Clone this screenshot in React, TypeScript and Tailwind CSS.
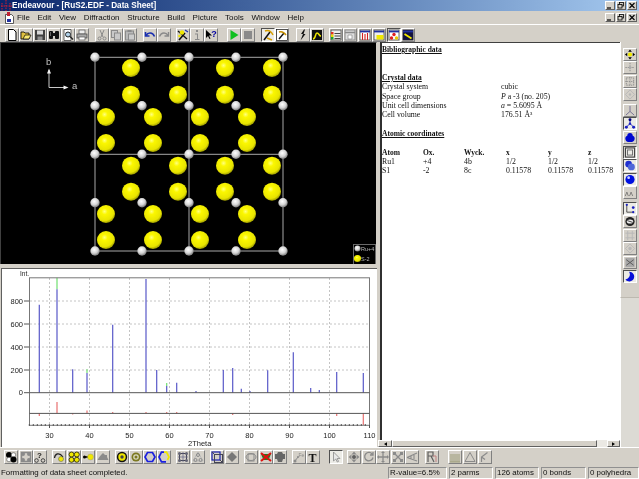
import React, { ReactNode } from "react";

const G = "#8a8a8a";
const D = "#5f5f5f";
const L = "#b8b8b8";
const Y = "#f0e800";

const icons: Record<string, ReactNode> = {
  new: <path d="M2.5 .5h5l2.5 2.5v8.5h-7.5z" fill="#fff" stroke="#000" />,
  open: <><path d="M1 3h3l1 1h4v6H1z" fill="#e0c040" stroke="#000" strokeWidth=".8" /><path d="M3 10l2-4h6l-2 4z" fill="#f8e870" stroke="#000" strokeWidth=".7" /></>,
  save: <><rect x="1" y="1" width="10" height="10" fill="#404040" /><rect x="3" y="1.5" width="6" height="4" fill="#d8d8d8" /><rect x="3.5" y="7.5" width="5" height="3.5" fill="#909090" /></>,
  find: <><rect x="1" y="2" width="4" height="8" rx="1" fill="#111" /><rect x="7" y="2" width="4" height="8" rx="1" fill="#111" /><rect x="4" y="4" width="4" height="3" fill="#111" /><rect x="2" y="3" width="1" height="4" fill="#666" /></>,
  preview: <><path d="M2 .5h7v11H2z" fill="#fff" stroke="#444" strokeWidth=".8" /><circle cx="6" cy="5.5" r="2.5" fill="#b0d0e8" stroke="#222" /><path d="M8 7.5l3 3" stroke="#222" strokeWidth="1.4" /></>,
  print: <><rect x="3" y="1" width="6" height="4" fill="#eee" stroke="#555" strokeWidth=".7" /><rect x="1" y="5" width="10" height="4" fill="#a8a8a8" stroke="#444" strokeWidth=".7" /><rect x="3" y="8" width="6" height="3" fill="#fff" stroke="#555" strokeWidth=".7" /></>,
  cut: <><path d="M4 1l3 7M8 1L5 8" stroke={G} fill="none" /><circle cx="3.5" cy="9.5" r="1.5" fill="none" stroke={G} /><circle cx="8.5" cy="9.5" r="1.5" fill="none" stroke={G} /></>,
  copy: <><rect x="1.5" y="1.5" width="6" height="7" fill="#c8c8c8" stroke={G} /><rect x="4.5" y="4" width="6" height="7" fill="#c8c8c8" stroke={G} /></>,
  paste: <><rect x="1.5" y="2" width="8" height="9" fill={L} stroke={G} /><rect x="4.5" y="5" width="6" height="6" fill="#ccc" stroke={G} /><rect x="3.5" y="1" width="4" height="2" fill={G} /></>,
  undo: <path d="M1.5 3v4h4M2 6.5C4 3 8.5 3 10.5 7.5" fill="none" stroke="#1a2fb0" strokeWidth="1.6" />,
  redo: <path d="M10.5 3v4h-4M10 6.5C8 3 3.5 3 1.5 7.5" fill="none" stroke={G} strokeWidth="1.4" />,
  wizard: <><path d="M2 11l6-7" stroke="#111" strokeWidth="1.6" /><path d="M1 2l9 8" stroke="#111" strokeWidth="1.3" /><circle cx="5" cy="3.5" r="2.2" fill={Y} /><circle cx="2.5" cy="7" r="1.3" fill={Y} /><path d="M8 1l3 2" stroke="#1a2fb0" strokeWidth="1.2" /></>,
  info: <><rect x="5" y="1" width="2" height="2" fill={G} /><path d="M4 4.5h3V10h1.5v1h-4.5v-1H6V5.5H4z" fill={G} /></>,
  help: <><path d="M1 1v8l2-2 1.5 3 1-.6L4 6.5h3z" fill="#000" /><text x="6.2" y="8" fontSize="9" fontWeight="700" fill="#0000a0" fontFamily="Liberation Sans, sans-serif">?</text></>,
  play: <path d="M2.5 1l8 5-8 5z" fill="#10c020" />,
  stop: <rect x="2" y="2" width="8" height="8" fill={G} />,
  pick: <><path d="M2 11l6-8" stroke="#111" strokeWidth="1.5" /><path d="M3 2c3-1 6 0 8 4" stroke="#d8a000" strokeWidth="1.5" fill="none" /><path d="M5 9l5 2" stroke="#d8a000" strokeWidth="1.5" /></>,
  pick2: <><rect x=".5" y=".5" width="11" height="11" fill="#fff" stroke="#111" strokeWidth=".7" /><path d="M3 10l5-6" stroke="#111" strokeWidth="1.4" /><path d="M3 3c3-1 5 0 7 3" stroke="#c89000" strokeWidth="1.4" fill="none" /></>,
  bolt: <path d="M7 .5L4 5h2L3.5 11.5 8.5 5H6.500L8 .5z" fill="#111" />,
  curve: <><rect x="1" y="1" width="10" height="10" fill="#111" /><path d="M2 10c3 0 2-6 4-6s2 3 4 3" stroke={Y} strokeWidth="1.5" fill="none" /></>,
  list: <><rect x="1" y="1" width="10" height="10" fill="#eee" stroke="#444" strokeWidth=".8" /><rect x="1" y="3" width="2.5" height="2.5" fill="#e03020" /><rect x="1" y="5.5" width="2.5" height="2.5" fill="#e8d800" /><rect x="1" y="8" width="2.5" height="2.5" fill="#20a030" /><path d="M4.5 4.5h6M4.5 7h6M4.5 9.5h6" stroke="#444" /></>,
  gwin: <><rect x="1" y="1" width="10" height="10" fill="#ddd" stroke={G} /><path d="M1 3.5h10" stroke={G} strokeWidth="1.5" /><path d="M4 6h4v4H4z" fill="#fff" stroke={G} strokeWidth=".7" /></>,
  rbars: <><rect x="1" y="1" width="10" height="10" fill="#fff" stroke="#444" strokeWidth=".8" /><path d="M1 2.5h10" stroke="#2030a0" strokeWidth="1.8" /><path d="M3.5 4v7M6 5v6M8.5 4v7" stroke="#d02020" strokeWidth="1.1" /></>,
  ywin: <><rect x="1" y="1" width="10" height="10" fill="#eee" stroke="#444" strokeWidth=".8" /><path d="M1 2.5h10" stroke="#2030a0" strokeWidth="1.8" /><rect x="3.5" y="6" width="7" height="4.5" fill={Y} /></>,
  awin: <><rect x="1" y="1" width="10" height="10" fill="#fff" stroke="#444" strokeWidth=".8" /><path d="M1 2.5h10" stroke="#2030a0" strokeWidth="1.8" /><circle cx="6" cy="5.5" r="1.7" fill="#e02020" /><circle cx="3.5" cy="9" r="1.7" fill="#e02020" /><circle cx="8.5" cy="9" r="1.7" fill="#e8c800" /></>,
  nwin: <><rect x="1" y="1" width="10" height="10" fill="#101040" stroke="#223" strokeWidth=".8" /><path d="M1 2.5h10" stroke="#2030a0" strokeWidth="1.8" /><path d="M2.5 5l7 4.5" stroke={Y} strokeWidth="1.8" /></>,

  bw: <><circle cx="4" cy="4" r="3" fill="#000" /><circle cx="8.5" cy="4" r="2.3" fill="#fff" stroke="#333" strokeWidth=".5" /><circle cx="4" cy="8.5" r="2.3" fill="#fff" stroke="#333" strokeWidth=".5" /><circle cx="8.5" cy="8.5" r="3" fill="#000" /></>,
  gcl: <><rect x="1.5" y="1.5" width="9" height="9" fill="none" stroke={G} strokeWidth="1.5" /><circle cx="3" cy="3" r="2" fill={G} /><circle cx="9" cy="3" r="2" fill={G} /><circle cx="3" cy="9" r="2" fill={G} /><circle cx="9" cy="9" r="2" fill={G} /></>,
  qr: <><text x="3" y="7" fontSize="8" fontWeight="700" fill="#222" fontFamily="Liberation Sans, sans-serif">?</text><circle cx="2.5" cy="9.5" r="1.8" fill="none" stroke="#444" /><circle cx="9" cy="9.5" r="1.8" fill="none" stroke="#444" /></>,
  arc: <><path d="M1.5 7C2 3 6 .5 10 6" stroke="#222" strokeWidth="1.2" fill="none" /><circle cx="8" cy="8" r="2.5" fill={Y} stroke="#555" strokeWidth=".5" /></>,
  yq: <><circle cx="3.5" cy="3.5" r="2.5" fill={Y} stroke="#000" strokeWidth=".7" /><circle cx="8.8" cy="3.5" r="2.5" fill={Y} stroke="#000" strokeWidth=".7" /><circle cx="3.5" cy="8.8" r="2.5" fill={Y} stroke="#000" strokeWidth=".7" /><circle cx="8.8" cy="8.8" r="2.5" fill={Y} stroke="#000" strokeWidth=".7" /></>,
  bond: <><circle cx="2.5" cy="6" r="1.5" fill="#000" /><path d="M2 6h6" stroke="#000" strokeWidth="1.5" /><circle cx="8.5" cy="6" r="3" fill={Y} stroke="#888" strokeWidth=".4" /></>,
  gbl: <path d="M6 2l2 2h2v2l1.5 3H.5L2 6.5 4 4z" fill={G} />,
  ring: <><circle cx="6" cy="6" r="5.2" fill="#111" /><circle cx="6" cy="6" r="3.7" fill={Y} /><circle cx="6" cy="6" r="1.7" fill="#444" /></>,
  oring: <><circle cx="6" cy="6" r="4.5" fill="#7c7820" /><circle cx="6" cy="6" r="2.8" fill="#d8d8c0" /><circle cx="6" cy="6" r="1.5" fill="#7c7820" /></>,
  hexb: <path d="M3.5 1.5h5L11 6l-2.500 4.500h-5L1 6z" fill="none" stroke="#1a20e0" strokeWidth="1.7" />,
  hexy: <><path d="M6 1.2h2.500L11 6l-1.500 3" fill="none" stroke={Y} strokeWidth="1.7" /><path d="M6 1.2H3.500L1 6l2.500 4.800H8" fill="none" stroke="#1a20e0" strokeWidth="1.7" /></>,
  lat: <><rect x="2.5" y="2.5" width="7" height="7" fill="none" stroke="#445" /><path d="M6 1v10M1 6h10" stroke="#668" strokeWidth=".7" /><circle cx="2.5" cy="2.5" r="1.5" fill="#667" /><circle cx="9.5" cy="2.5" r="1.5" fill="#667" /><circle cx="2.5" cy="9.5" r="1.5" fill="#667" /><circle cx="9.5" cy="9.5" r="1.5" fill="#667" /></>,
  glat: <><path d="M6 1L1 10h10z" fill="none" stroke={L} strokeWidth="1" /><circle cx="6" cy="4" r="1.5" fill="none" stroke={G} /><circle cx="3.5" cy="9" r="1.5" fill="none" stroke={G} /><circle cx="8.5" cy="9" r="1.5" fill="none" stroke={G} /></>,
  cube: <><rect x="1" y="1" width="8" height="8" fill="none" stroke="#1a20b0" strokeWidth="1.2" /><rect x="3.5" y="3.5" width="8" height="8" fill="none" stroke="#445" strokeWidth="1" /><path d="M1 1l2.500 2.500M9 9l2.500 2.500" stroke="#445" /></>,
  dia: <path d="M6 1l5 5-5 5-5-5z" fill="#777" />,
  gcube: <><ellipse cx="6" cy="6" rx="5" ry="3.5" fill="none" stroke={G} /><rect x="3" y="3" width="6" height="7" fill="none" stroke={G} /></>,
  red: <><path d="M1 3h10L8.500 9h-5z" fill="#208020" /><path d="M1 2l10 8M11 2L1 10" stroke="#e01010" strokeWidth="2" /></>,
  gblob: <path d="M4 1h4l1 2h2v5H9l-1 3H4L3 8H1V3h2z" fill="#666" />,
  fe: <><circle cx="2" cy="10" r="1.5" fill={G} /><path d="M2 10l3-4" stroke={G} /><circle cx="5" cy="6" r="1" fill={G} /><text x="5.5" y="5.5" fontSize="5" fill={G} fontFamily="Liberation Sans, sans-serif">Fe</text></>,
  t: <text x="1.5" y="10.5" fontSize="12" fontWeight="700" fill="#111" fontFamily="Liberation Serif, serif">T</text>,
  ptr: <path d="M3.5 1v9l2.300-2 1.500 3 1.300-.6L7.100 7.500H10z" fill="#e8e8e8" stroke={G} strokeWidth=".8" />,
  mv: <><path d="M6 .5l2.500 3h-5zM6 11.500l2.500-3h-5zM.5 6l3-2.500v5zM11.500 6l-3-2.500v5z" fill={G} /><circle cx="6" cy="6" r="2" fill={D} /></>,
  rot: <path d="M9.5 3.5A4.200 4.200 0 1 0 10 6.500M10 1v3H7" fill="none" stroke={G} strokeWidth="1.3" />,
  cross: <><path d="M6 1v10M1 6h10" stroke={G} strokeWidth="1.3" /><path d="M6 0l2 2H4zM6 12l2-2H4zM0 6l2-2v4zM12 6l-2-2v4z" fill={G} /></>,
  xx: <><path d="M2.5 2.5l7 7M9.5 2.500l-7 7" stroke={G} strokeWidth="1.3" /><rect x="1" y="1" width="3" height="3" fill={G} /><rect x="8" y="1" width="3" height="3" fill={G} /><rect x="1" y="8" width="3" height="3" fill={G} /><rect x="8" y="8" width="3" height="3" fill={G} /></>,
  pers: <path d="M1 6.500L11 2M1 6.500L11 10M5 5v3M8 4v4" fill="none" stroke={G} strokeWidth="1.1" />,
  rr: <><path d="M2 1h5v4H2zM2 5v6M5 5l3 6" fill="none" stroke={D} strokeWidth="1.2" /><path d="M7 5h3v6" fill="none" stroke="#c08080" /></>,
  bars: <path d="M1 11h10M2 3v8M4 3v8M6 3v8M8 3v8M10 3v8" stroke="#9c9c78" fill="none" />,
  tri: <path d="M6 1.500L11 10.500H1z" fill="none" stroke={G} />,
  yy: <path d="M2.5 11V6l6-4.500M2.500 6L6 8.500" fill="none" stroke={G} strokeWidth="1.2" />,

  star: <><path d="M6 .5l2 2.500H4zM6 11.500l2-2.500H4zM.5 6L3 4v4zM11.500 6L9 4v4z" fill="#000" /><circle cx="6" cy="6" r="2.3" fill={Y} /></>,
  gs1: <><path d="M6 1v10M1 6h10" stroke={G} strokeDasharray="1.5 1" /><circle cx="6" cy="6" r="1.5" fill="#aaa" /></>,
  gs2: <><rect x="2" y="2" width="8" height="8" fill="none" stroke={G} strokeDasharray="1.5 1" /><path d="M6 1v10M1 6h10" stroke={G} strokeDasharray="1 1" /></>,
  gs3: <><path d="M6 1l5 5-5 5-5-5z" fill="none" stroke={L} /><circle cx="6" cy="6" r="1.3" fill={L} /></>,
  ax: <path d="M6 1v6M1.500 11L6 7l4.500 4" fill="none" stroke="#706c90" strokeWidth="1" />,
  net: <><path d="M6 2v4L2 10M6 6l4 4" fill="none" stroke="#1a20c0" /><circle cx="6" cy="2" r="1.6" fill="#000080" /><circle cx="6" cy="6.2" r="1.3" fill="#1a20c0" /><circle cx="2" cy="10" r="1.6" fill="#1a20c0" /><circle cx="10" cy="10" r="1.6" fill="#1a20c0" /></>,
  blob: <path d="M6 1c2 0 3 1.500 3 3 1.500 .5 2.500 2 2 4-.5 2-2 3-3 3H4c-1.500 0-2.500-1-3-3-.5-2 .5-3.500 2-4 0-1.500 1-3 3-3z" fill="#0008d0" />,
  sq: <><rect x="1" y="1" width="10" height="10" fill="none" stroke="#444" strokeWidth="1.3" /><rect x="3.2" y="3.2" width="5.6" height="5.6" fill="none" stroke="#666" /></>,
  s2: <><circle cx="4.5" cy="4.5" r="3.6" fill="#2030d0" /><circle cx="7.5" cy="7.5" r="3.8" fill="#5068d8" /></>,
  s1: <><circle cx="6" cy="6" r="5" fill="#0010e0" /><circle cx="4.5" cy="4" r="1.5" fill="#c8d0ff" /></>,
  aa: <text x=".5" y="10" fontSize="8" fill={D} fontFamily="Liberation Sans, sans-serif" letterSpacing=".6">ʌʌ</text>,
  axb: <><path d="M2.5 1v9h8" fill="none" stroke="#444" strokeWidth="1" /><circle cx="2.5" cy="2" r="1.2" fill="#1a20c0" /><circle cx="9.5" cy="5" r="1.5" fill="#1a20c0" /><circle cx="9.5" cy="10" r="1.2" fill="#1a20c0" /></>,
  ell: <><circle cx="6" cy="6" r="5" fill="#222" /><ellipse cx="6" cy="6" rx="3.5" ry="2.3" fill="#eee" /><path d="M3 5l6 2" stroke="#333" /></>,
  grid: <path d="M3.5 1v10M8.500 1v10M1 3.500h10M1 8.500h10" stroke={L} />,
  gd: <><path d="M6 1l5 5-5 5-5-5z" fill="none" stroke={L} /><circle cx="6" cy="6" r="1.8" fill={L} /></>,
  hatch: <><rect x="1" y="1" width="10" height="10" fill="#a8a8a8" /><path d="M2 3l8 6M10 3l-8 6" stroke="#555" /></>,
  moon: <path d="M5 .8A5.300 5.300 0 1 1 1 9.200 5.500 5.500 0 0 0 5 .8z" fill="#0810d8" />,
};

function Btn({ n, on, cls }: { n: string; on?: boolean; cls?: string }) {
  return (
    <div
      className={`box-border shrink-0 w-[14px] border ${cls ?? "h-[14px]"} ${
        on
          ? "border-t-[#505050] border-l-[#505050] border-b-white border-r-white bg-[#ecebe6]"
          : "border-t-white border-l-white border-b-[#808080] border-r-[#808080]"
      }`}
    >
      <svg viewBox="0 0 12 12" className="block w-full h-full">
        {icons[n]}
      </svg>
    </div>
  );
}

function Group({ items, cls }: { items: string[]; cls: string }) {
  return (
    <div className={`flex ${cls}`}>
      {items.map((s, i) => {
        const on = s.startsWith("*");
        return <Btn key={i} n={on ? s.slice(1) : s} on={on} />;
      })}
    </div>
  );
}

function VGroup({ items, cls }: { items: string[]; cls: string }) {
  return (
    <div className={`flex flex-col gap-[0.5px] ${cls}`}>
      {items.map((s, i) => {
        const on = s.startsWith("*");
        return <Btn key={i} n={on ? s.slice(1) : s} on={on} cls="h-[13px]" />;
      })}
    </div>
  );
}

function WinBtns() {
  return (
    <div className="flex gap-[1px]">
      {["min", "max", "close"].map((k) => (
        <div key={k} className="w-[10px] h-[9px] bg-[#d4d0c8] border border-t-white border-l-white border-b-[#606060] border-r-[#606060] box-border">
          <svg viewBox="0 0 8 7" className="block w-full h-full">
            {k === "min" && <path d="M1 6h4" stroke="#000" strokeWidth="1.2" />}
            {k === "max" && <><rect x="2.5" y=".5" width="4" height="3.5" fill="none" stroke="#000" strokeWidth=".8" /><rect x="1" y="2.5" width="4" height="3.5" fill="#d4d0c8" stroke="#000" strokeWidth=".8" /></>}
            {k === "close" && <path d="M1.5 1l5 5M6.500 1l-5 5" stroke="#000" strokeWidth="1.1" />}
          </svg>
        </div>
      ))}
    </div>
  );
}

const GREY_X = [95, 142, 189, 236, 283];
const GREY_Y = [57.3, 105.7, 154.3, 202.7, 251];
const YEL_A_X = [131, 178, 225, 272];
const YEL_A_Y = [68, 94.7, 165.7, 191.7];
const YEL_B_X = [106, 153, 200, 247];
const YEL_B_Y = [117, 143, 214, 240];

function Structure() {
  return (
    <svg width="375" height="221" className="block">
      <defs>
        <radialGradient id="yb" cx="0.42" cy="0.36" r="0.68">
          <stop offset="0" stopColor="#ffff80" />
          <stop offset="0.25" stopColor="#fbf700" />
          <stop offset="0.75" stopColor="#e8e400" />
          <stop offset="1" stopColor="#8c8a00" />
        </radialGradient>
        <radialGradient id="gb" cx="0.42" cy="0.36" r="0.68">
          <stop offset="0" stopColor="#ffffff" />
          <stop offset="0.55" stopColor="#d4d4d4" />
          <stop offset="1" stopColor="#6c6c6c" />
        </radialGradient>
      </defs>
      <g transform="translate(-1,-43)">
        <path d="M95 57.3H283V251H95zM189 57.3V251M95 154.3H283" fill="none" stroke="#a8a8a8" strokeWidth="1" />
        {YEL_A_Y.map((y) => YEL_A_X.map((x) => <circle key={`${x}-${y}`} cx={x} cy={y} r="9" fill="url(#yb)" />))}
        {YEL_B_Y.map((y) => YEL_B_X.map((x) => <circle key={`${x}-${y}`} cx={x} cy={y} r="9" fill="url(#yb)" />))}
        {GREY_Y.map((y) => GREY_X.map((x) => <circle key={`${x}-${y}`} cx={x} cy={y} r="4.7" fill="url(#gb)" />))}
        <path d="M49 70V87.5H67" fill="none" stroke="#c8c8c8" strokeWidth="1" />
        <path d="M49 68.5l2 5h-4zM68.5 87.5l-5 2v-4z" fill="#f0f0f0" />
        <text x="46" y="65" fontSize="9.5" fill="#c0c0c0" fontFamily="Liberation Sans, sans-serif">b</text>
        <text x="72" y="89" fontSize="9.5" fill="#c0c0c0" fontFamily="Liberation Sans, sans-serif">a</text>
        <rect x="353.5" y="244.5" width="22" height="20" fill="#000" stroke="#686868" />
        <circle cx="357.5" cy="248.5" r="3" fill="url(#gb)" />
        <circle cx="357.5" cy="258.5" r="3.6" fill="url(#yb)" />
        <text x="361" y="251" fontSize="5.5" fill="#b8b8b8" fontFamily="Liberation Sans, sans-serif">Ru+4</text>
        <text x="361" y="261" fontSize="5.5" fill="#b8b8b8" fontFamily="Liberation Sans, sans-serif">S-2</text>
      </g>
    </svg>
  );
}

const PEAKS: [number, number, number?][] = [
  [39.3, 304.7], [57, 289.3, 277.7], [72.7, 369.3], [87, 373, 369.3], [112.7, 324.7], [146, 279], [156.7, 370],
  [166.7, 386, 383], [176.7, 382.7], [196, 391], [223.3, 370], [232.7, 368], [241.3, 388.7], [250, 391],
  [267.7, 370.3], [293.3, 352.3], [310.7, 388], [319.3, 390], [336.7, 372], [363.3, 373],
];
const DIFFS: [number, number][] = [
  [39.3, 416], [57, 402], [72.7, 414.5], [87, 410.5], [112.7, 412], [146, 412], [166.7, 412], [176.7, 412],
  [232.7, 415], [336.7, 416], [363.3, 425],
];

function Chart() {
  const txs = [30, 40, 50, 60, 70, 80, 90, 100, 110];
  const minor: number[] = [];
  for (let x = 29.3; x < 369; x += 4) minor.push(x);
  return (
    <svg width="376" height="178" className="block">
      <g transform="translate(-2,-269)">
        {txs.map((t) => {
          const x = 49.5 + (t - 30) * 4;
          return <path key={t} d={`M${x} 278V425`} stroke="#c4c4c4" strokeDasharray="2 2" />;
        })}
        {[301, 324, 347, 370].map((y) => <path key={y} d={`M30 ${y}H369`} stroke="#c4c4c4" strokeDasharray="2 2" />)}
        {PEAKS.map(([x, top, g]) => (
          <g key={x}>
            {g && <path d={`M${x} ${g}V${top}`} stroke="#70e070" strokeWidth="1.2" />}
            <path d={`M${x} ${top}V392.7`} stroke="#5858c8" strokeWidth="1.2" />
          </g>
        ))}
        {DIFFS.map(([x, y]) => <path key={x} d={`M${x} ${y}V413.3`} stroke="#e87070" strokeWidth="1.2" />)}
        <rect x="29.5" y="277.8" width="340" height="147.5" fill="none" stroke="#777" />
        <path d="M29.5 392.7H369.5M29.5 413.4H369.5" stroke="#555" />
        {minor.map((x) => <path key={x} d={`M${x} 424V426`} stroke="#555" />)}
        {txs.map((t) => {
          const x = 49.5 + (t - 30) * 4;
          return <g key={t}><path d={`M${x} 425V428`} stroke="#555" /><text x={x} y="438" fontSize="7.5" fill="#222" textAnchor="middle" fontFamily="Liberation Sans, sans-serif">{t}</text></g>;
        })}
        {[[800, 301], [600, 324], [400, 347], [200, 370], [0, 392.7]].map(([v, y]) => (
          <g key={v}>
            <path d={`M24 ${y}H29`} stroke="#555" />
            <text x="23" y={y + 2.7} fontSize="7.5" fill="#222" textAnchor="end" fontFamily="Liberation Sans, sans-serif">{v}</text>
          </g>
        ))}
        <text x="20" y="276" fontSize="6.5" fill="#222" fontFamily="Liberation Sans, sans-serif">Int.</text>
        <text x="188" y="446" fontSize="7.5" fill="#222" fontFamily="Liberation Sans, sans-serif">2Theta</text>
      </g>
    </svg>
  );
}

function Row({ a, b, strong }: { a?: ReactNode; b?: ReactNode; strong?: boolean }) {
  return (
    <div className={`flex h-[9.33px] leading-[9.33px] whitespace-nowrap ${strong ? "font-bold underline text-[7.5px]" : ""}`}>
      <div className="w-[119px]">{a}</div>
      <div>{b}</div>
    </div>
  );
}

function TableRow({ c, bold }: { c: string[]; bold?: boolean }) {
  return (
    <div className={`grid grid-cols-[41px_41px_42px_42px_40px_1fr] h-[9.33px] leading-[9.33px] whitespace-nowrap ${bold ? "font-bold text-[7.5px]" : ""}`}>
      {c.map((s, i) => <div key={i}>{s}</div>)}
    </div>
  );
}

function Pane({ w, children }: { w: string; children: ReactNode }) {
  return (
    <div className={`${w} box-border h-[12px] mt-[1px] pl-[1px] leading-[10px] border border-t-[#909090] border-l-[#909090] border-b-white border-r-white ml-[2px] whitespace-nowrap`}>
      {children}
    </div>
  );
}

export default function App() {
  const menu = ["File", "Edit", "View", "Diffraction", "Structure", "Build", "Picture", "Tools", "Window", "Help"];
  return (
    <div className="w-[639px] h-[479px] overflow-hidden flex flex-col bg-[#d4d0c8] text-[#111] font-['Liberation_Sans',sans-serif] text-[8px] select-none blur-[0.35px]">
      {/* title */}
      <div className="h-[11px] flex items-center bg-gradient-to-r from-[#0a246a] to-[#a6caf0] pr-[2px] shrink-0">
        <svg viewBox="0 0 11 11" className="w-[11px] h-[11px] ml-[1px]">
          <path d="M5 0v11M1 3v8M9 3v8M0 6h11" stroke="#d02030" strokeDasharray="1.5 1" />
        </svg>
        <span className="text-white font-bold text-[8.2px] leading-[11px] whitespace-nowrap">Endeavour - [RuS2.EDF - Data Sheet]</span>
        <div className="ml-auto"><WinBtns /></div>
      </div>
      {/* menu */}
      <div className="h-[13px] flex items-center shrink-0 pr-[2px]">
        <svg viewBox="0 0 11 12" className="w-[11px] h-[12px] ml-[4px]">
          <path d="M1.5 2.500h6l2 2v7h-8z" fill="#fff" stroke="#333" strokeWidth=".8" />
          <rect x="3" y="0" width="3" height="4" fill="#c02030" />
          <rect x="3" y="7" width="4" height="3" fill="#2030a0" />
        </svg>
        <div className="flex gap-[7.6px] ml-[2px] text-[8px] text-[#111] whitespace-nowrap">
          {menu.map((m) => <span key={m}>{m}</span>)}
        </div>
        <div className="ml-auto"><WinBtns /></div>
      </div>
      {/* top toolbar */}
      <div className="h-[18px] flex items-start pt-[3px] shrink-0 border-t border-t-white box-border">
        <Group cls="ml-[5px]" items={["new", "open", "save", "find", "preview", "print"]} />
        <Group cls="ml-[6px]" items={["cut", "copy", "paste"]} />
        <Group cls="ml-[6px]" items={["undo", "redo"]} />
        <Group cls="ml-[5px]" items={["wizard", "info", "help"]} />
        <Group cls="ml-[9px]" items={["play", "stop"]} />
        <Group cls="ml-[6px]" items={["*pick", "pick2"]} />
        <Group cls="ml-[7px]" items={["bolt", "curve"]} />
        <Group cls="ml-[5px] gap-[0.4px]" items={["list", "gwin", "rbars", "ywin", "*awin", "nwin"]} />
      </div>
      {/* client */}
      <div className="flex flex-1 min-h-0">
        <div className="w-[377px] flex flex-col shrink-0">
          <div className="h-[222px] bg-black border-t border-t-[#404040] border-l border-l-[#404040] border-r border-r-[#d4d0c8] box-border shrink-0 overflow-hidden">
            <Structure />
          </div>
          <div className="h-[4px] shrink-0" />
          <div className="flex-1 bg-white border-t border-l border-t-[#606060] border-l-[#606060] box-border ml-[1px] overflow-hidden">
            <Chart />
          </div>
        </div>
        <div className="w-[3px] shrink-0" />
        <div className="w-[240px] shrink-0 flex flex-col">
          <div className="flex-1 bg-white border-t border-t-[#404040] border-l-2 border-l-[#303030] box-border pt-[2px] text-[7.8px] text-[#111] font-['Liberation_Serif',serif] overflow-hidden">
            <Row a="Bibliographic data" strong />
            <Row /><Row />
            <Row a="Crystal data" strong />
            <Row a="Crystal system" b="cubic" />
            <Row a="Space group" b={<><i>P</i> a -3 (no. 205)</>} />
            <Row a="Unit cell dimensions" b={<><i>a</i> = 5.6095 Å</>} />
            <Row a="Cell volume" b="176.51 Å³" />
            <Row />
            <Row a="Atomic coordinates" strong />
            <Row />
            <TableRow bold c={["Atom", "Ox.", "Wyck.", "x", "y", "z"]} />
            <TableRow c={["Ru1", "+4", "4b", "1/2", "1/2", "1/2"]} />
            <TableRow c={["S1", "-2", "8c", "0.11578", "0.11578", "0.11578"]} />
          </div>
          <div className="h-[7px] flex shrink-0 items-stretch ml-[-2px]">
            <div className="w-[14px] flex items-center justify-center border border-t-white border-l-white border-b-[#606060] border-r-[#606060] box-border">
              <svg viewBox="0 0 4 5" className="w-[3px] h-[4px]"><path d="M4 0L0 2.5 4 5z" fill="#000" /></svg>
            </div>
            <div className="w-[205px] border border-t-white border-l-white border-b-[#606060] border-r-[#606060] box-border" />
            <div className="flex-1 bg-[#ebe9e4]" />
            <div className="w-[13px] flex items-center justify-center border border-t-white border-l-white border-b-[#606060] border-r-[#606060] box-border">
              <svg viewBox="0 0 4 5" className="w-[3px] h-[4px]"><path d="M0 0l4 2.5L0 5z" fill="#000" /></svg>
            </div>
          </div>
        </div>
        <div className="flex-1 flex flex-col items-center">
          <div className="w-full h-[255px] flex flex-col items-center pt-[5.5px] shrink-0 border-l border-l-white box-border">
            <VGroup cls="" items={["star", "gs1", "gs2", "gs3"]} />
            <VGroup cls="mt-[2.5px]" items={["ax", "*net", "blob"]} />
            <VGroup cls="mt-[2px]" items={["*sq", "*s2", "*s1", "aa"]} />
            <VGroup cls="mt-[2.5px]" items={["*axb", "ell", "grid", "gd"]} />
            <VGroup cls="mt-[1px]" items={["hatch", "*moon"]} />
          </div>
          <div className="w-full flex-1 bg-[#dcdad4] border-t border-t-[#bdb9b0] border-l border-l-white box-border" />
        </div>
      </div>
      {/* bottom toolbar */}
      <div className="h-[19px] flex items-center shrink-0 border-t border-t-white box-border">
        <Group cls="ml-[4px] gap-[0.5px]" items={["bw", "gcl", "qr"]} />
        <Group cls="ml-[5px] gap-[0.5px]" items={["arc", "yq", "bond", "gbl"]} />
        <Group cls="ml-[5.5px]" items={["ring", "oring", "hexb", "hexy"]} />
        <Group cls="ml-[5px] gap-[1px]" items={["lat", "glat"]} />
        <Group cls="ml-[5px] gap-[1px]" items={["cube", "dia"]} />
        <Group cls="ml-[5px] gap-[0.5px]" items={["gcube", "red", "gblob"]} />
        <Group cls="ml-[5px]" items={["fe", "t"]} />
        <Group cls="ml-[9px]" items={["*ptr"]} />
        <Group cls="ml-[4px] gap-[0.6px]" items={["mv", "rot", "cross", "xx", "pers"]} />
        <Group cls="ml-[5.6px]" items={["rr"]} />
        <Group cls="ml-[9px] gap-[1px]" items={["bars", "tri", "yy"]} />
      </div>
      {/* status */}
      <div className="h-[13px] flex shrink-0 text-[7.9px] text-[#111] bg-[#d4d0c8]">
        <div className="w-[386px] pl-[1px] leading-[13px] whitespace-nowrap">Formatting of data sheet completed.</div>
        <Pane w="w-[59px]">R-value=6.5%</Pane>
        <Pane w="w-[44px]">2 parms</Pane>
        <Pane w="w-[44px]">126 atoms</Pane>
        <Pane w="w-[45px]">0 bonds</Pane>
        <Pane w="w-[51px]">0 polyhedra</Pane>
      </div>
    </div>
  );
}
